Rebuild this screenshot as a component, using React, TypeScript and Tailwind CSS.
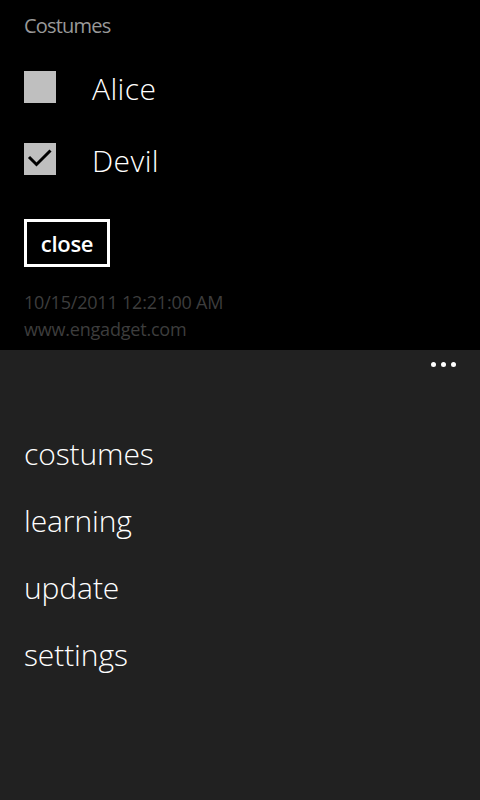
import React from 'react';

const costumes = [
  { name: 'Alice', checked: false },
  { name: 'Devil', checked: true },
];

const menu = ['costumes', 'learning', 'update', 'settings'];

function CheckBox({ checked }: { checked: boolean }) {
  return (
    <div className="w-8 h-8 mt-[20px] shrink-0 bg-[#bfbfbf]">
      {checked && (
        <svg viewBox="0 0 32 32" className="w-8 h-8">
          <polyline points="5,14 12.5,21.5 26.5,7.5" fill="none" stroke="#000" strokeWidth="3" />
        </svg>
      )}
    </div>
  );
}

export default function App() {
  return (
    <div className="w-[480px] h-[800px] flex flex-col bg-[#212121] font-['Open_Sans','Noto_Sans',sans-serif] overflow-hidden">
      <div className="h-[350px] shrink-0 bg-black px-6 pt-3 overflow-hidden">
        <p className="text-[20px] leading-[28px] tracking-[-0.8px] text-[#999999]">Costumes</p>
        <div className="mt-[11px]">
          {costumes.map((c) => (
            <div key={c.name} className="flex items-start h-[72px]">
              <CheckBox checked={c.checked} />
              <span className="ml-[36px] mt-[2px] text-[30px] leading-[72px] tracking-[0.4px] font-light text-white">{c.name}</span>
            </div>
          ))}
        </div>
        <button className="mt-6 w-[86px] h-[48px] border-[3px] border-white flex items-center justify-center text-white text-[22px] leading-[42px] font-semibold tracking-[-0.3px]">
          close
        </button>
        <div className="mt-[22px] text-[18px] leading-[27px] tracking-[-0.2px] text-[#3d3d3d]">
          <p>10/15/2011 12:21:00 AM</p>
          <p>www.engadget.com</p>
        </div>
      </div>
      <div className="flex-1">
        <div className="flex justify-end gap-[5px] pt-3 pr-6">
          <span className="w-[5px] h-[5px] rounded-full bg-white" />
          <span className="w-[5px] h-[5px] rounded-full bg-white" />
          <span className="w-[5px] h-[5px] rounded-full bg-white" />
        </div>
        <ul className="mt-[53px] px-6">
          {menu.map((m) => (
            <li key={m} className="text-[30px] leading-[67px] tracking-[-0.1px] font-light text-white">{m}</li>
          ))}
        </ul>
      </div>
    </div>
  );
}
